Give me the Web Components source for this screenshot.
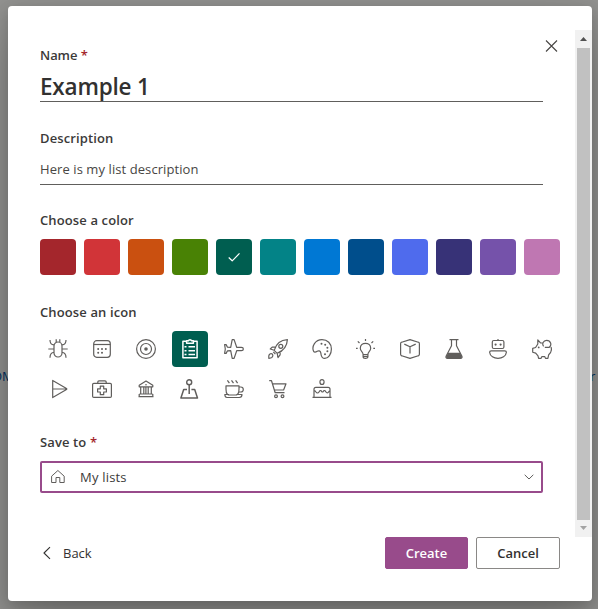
<!DOCTYPE html>
<html lang="en">
<head>
<meta charset="utf-8">
<title>Create list</title>
<style>
html, body { margin: 0; height: 100%; overflow: hidden; }
body { font-family: "Open Sans", "Noto Sans", sans-serif; font-size: 13px; color: #323130; background: #919191; }
</style>
</head>
<body>
<list-page></list-page>
<script>
const ICONS = {
  bug: '<rect x="6" y="3" width="8" height="15" rx="4"/><path d="M8.2 3V.3M11.8 3V.3M6 5.8C3 5.8 2 4 2 1M14 5.8c3 0 4-1.800 4-4.800M.3 10H6M14 10h5.700M6 13.500c-3 0-4 1.800-4 5.200M14 13.500c3 0 4 1.800 4 5.200"/>',
  calendar: '<rect x="1.700" y="1.700" width="16.600" height="16.600" rx="3"/><path d="M1.700 5.500h16.600"/><g fill="currentColor" stroke="none"><circle cx="6.200" cy="10" r="1"/><circle cx="10" cy="10" r="1"/><circle cx="13.800" cy="10" r="1"/><circle cx="6.200" cy="13.800" r="1"/><circle cx="10" cy="13.800" r="1"/></g>',
  target: '<circle cx="10" cy="10" r="9.400"/><circle cx="10" cy="10" r="5.500"/><circle cx="10" cy="10" r="1.800" fill="currentColor" stroke="none"/>',
  clipboard: '<path d="M6.500 2.200h-3.600v16.600h14.200V2.200h-3.600M6.600 3.500V1.800h1.800C8.700.5 11.300.5 11.600 1.800h1.800v2.400H6.600z" stroke-width="1.500"/><path d="M8.500 7.700h6.500M8.500 11.700h6.500M8.500 15.500h6.500M4.500 7.700h2M4.500 11.700h2M4.500 15.500h2" stroke-width="1.500"/>',
  plane: '<path d="M6.700 8.400 3.500 8.200 2.100 5.600H.6L1.300 10l-.7 4.400h1.500l1.400-2.600 3.200-.2 1.500 7.800h1.900l2.600-7.700h4.700c2.600 0 2.600-3.400 0-3.400h-4.700L10.100.6H8.200z"/>',
  rocket: '<path d="M6.200 11.300C7.600 6.500 11.500 1 19.400.6 19 8 14 12.400 9.200 14.300zM7.600 8 4.200 8.100 2.300 10l3.900 1.300M12.200 12.800l-.1 3.100-2.100 2.600-.8-4.200"/><circle cx="12.800" cy="7.300" r="2"/><path d="M.9 19.300c-.5-3 .4-4.600 2.200-4.600 2 0 2.300 2.600.7 3.800-.7.500-1.700.7-2.900.8zM5.300 12.800l2.100 2.300"/>',
  palette: '<path d="M1.600 12.300C-.6 7.400 3.200.6 10 .6c5.500 0 9.400 4 9.400 9.400 0 5.100-3 9.400-6.600 9.400-3.900 0-3.500-3-4-5.500-.5-2.400-2.400-2.300-3.600-1.600-1.500.9-2.800 1.200-3.600 0z"/><g fill="currentColor" stroke="none"><circle cx="9.500" cy="4.700" r="1"/><circle cx="13.200" cy="5.800" r="1"/><circle cx="15.400" cy="8.800" r="1"/><circle cx="15.400" cy="12.300" r="1"/><circle cx="13" cy="15.300" r="1"/></g>',
  bulb: '<g transform="translate(-.5)"><path d="M7.600 15.500c0-2.400-2.800-3.300-2.800-6.200 0-6.700 10.400-6.700 10.400 0 0 2.900-2.800 3.800-2.800 6.200zM7.600 15.500v2.200c0 2.100 4.800 2.100 4.800 0v-2.200M7.600 17.300h4.800M10 2V0M4 4 2.300 2.300M16 4l1.700-1.700M2.200 9.400H.5M17.800 9.400h1.700"/></g>',
  box: '<path d="m10 .6 8.300 2.600q1.100.3 1.100 1.500v10.600q0 1.200-1.100 1.500L10 19.400l-8.300-2.600q-1.100-.3-1.100-1.500V4.700q0-1.200 1.100-1.500zM4.300 5.100 10 7.800l5.700-2.700M10 7.800v6.600"/>',
  flask: '<path d="M5.500.6h9M7.500.6v6.200L2.200 17q-1 2.300 1.500 2.400h12.600q2.500-.1 1.500-2.400L12.500 6.800V.6"/><path d="M4 13.700h12l2 4q.3 1.700-1.700 1.700H3.700q-2 0-1.700-1.700z" fill="currentColor" stroke="none"/>',
  robot: '<path d="M10 1.500V0"/><rect x="4.300" y="1.500" width="11.600" height="8" rx="1.500"/><path d="M3.200 11.800h13.600q1.600 0 1.600 1.500C18 17.300 14 19.400 10 19.400S2 17.300 1.600 13.300Q1.600 11.800 3.200 11.800z"/><circle cx="7.600" cy="5.600" r="1.100" fill="currentColor" stroke="none"/><circle cx="12.600" cy="5.600" r="1.100" fill="currentColor" stroke="none"/>',
  piggy: '<path d="M10.700 4 8.500 3.800 5.800 1v4L3.600 8.500.7 9.300v3.900l3 .9 2.300 2.700.6 2.600h2.500l.7-1.800h3l.7 1.800h2.400l.8-3.700c2.300-2 3.300-4.800 2.300-7.700"/><path d="M11.600 7.400C9.700 5 11.200 1.300 14.600 1.300c4.200 0 5.500 4.700 2.700 7h-4.500"/><circle cx="6.700" cy="8.400" r=".9" fill="currentColor" stroke="none"/>',
  send: '<path d="m4.700 1.400 13.800 8.200q.7.400 0 .8L4.700 18.600zM4.700 10H19"/>',
  medkit: '<rect x=".6" y="4.400" width="18.800" height="14" rx="1.200"/><path d="M5.800 4.400V3q0-1.200 1.200-1.200h6q1.200 0 1.200 1.200v1.400M8.300 7.100h3.400v2.700h2.700v3.200h-2.700v2.700H8.300V13H5.600V9.800h2.700z"/>',
  bank: '<path d="m10 2 6.800 4.300v1.500H3.200V6.300zM4.700 7.900v7M7.800 7.900v7M12.200 7.900v7M15.300 7.900v7M3.400 15h13.200M2.500 17.600h15M3.200 15v2.600M16.800 15v2.600M9.900 8v7"/><circle cx="10" cy="5.700" r=".8" fill="currentColor" stroke="none"/>',
  joystick: '<circle cx="9.200" cy="3.200" r="2.500" stroke-width="1.400"/><path d="M9.200 5.800v9.300M7 10.500H3.700L.9 19h16.600l-2.800-8.500h-3.300" stroke-width="1.500"/>',
  coffee: '<path d="M2 6.800h13v3.500c0 6-2.500 5.700-4.500 5.700h-4C4.300 16 2 16.200 2 10.300zM15 8h1.800c3.300 0 3.300 5 0 5h-2.300M1.300 15.500H5M12.300 15.500H18q0 3-2.800 3H3Q1 18.500.8 15.500h3M3.400 1.300l2 2.900M7.500 1.300l2 2.900M11.600 1.300l2 2.900"/>',
  cart: '<path d="M1.200 1.700h2.300l3.700 12h9.300M4.500 4.800H18L15.600 11H6.300"/><circle cx="8" cy="17.200" r="1.400"/><circle cx="14.500" cy="17.200" r="1.400"/>',
  cake: '<path d="M10 .7c3 0 2.500 4.800 0 4.800S7 .7 10 .7zM2 18.300V10.200q0-1.900 1.900-1.900h12.200q1.900 0 1.900 1.900v8.100M.5 18.400h19M2 11.700c1 .2 1.600.6 2 1.300.8 1.300 2.200 1.300 3 0l.8-1.200q.7-.6 1.400 0l.8 1.200h.9l.8-1.200q.7-.6 1.400 0l.9 1.200c.8 1.300 2 1 2.600 0 .4-.7.800-1 1.400-1.200"/>',
  close: '<path d="m5 4.500 11 11m0-11-11 11" stroke-width="1.100"/>',
  check: '<path d="m4.700 10.500 3.500 3.300 7.300-7.400" stroke-width="1.200"/>',
  home: '<path d="M3.600 9.200 9.900 3.500 16.200 9.200v6.300h-4.400v-5H8v5H3.600z" stroke-width="1" stroke-linejoin="round"/>',
  down: '<path d="m5.700 7.800 4.300 4.200 4.300-4.200" stroke-width="1"/>',
  back: '<path d="M13 4.200 7 10l6 5.800" stroke-width="1.100"/>'
};

const define = (name, html) => customElements.define(name, class extends HTMLElement {
  constructor() {
    super();
    this.attachShadow({ mode: 'open' }).innerHTML = html;
  }
});

customElements.define('line-icon', class extends HTMLElement {
  connectedCallback() {
    if (this.shadowRoot) return;
    this.attachShadow({ mode: 'open' }).innerHTML = `<style>:host{display:block;width:20px;height:20px;flex:none}svg{display:block}</style>
      <svg width="20" height="20" viewBox="0 0 20 20" fill="none" stroke="currentColor" stroke-width="1.200" stroke-linejoin="round">${ICONS[this.getAttribute('name')]}</svg>`;
  }
});

define('field-label', `<style>
  :host{display:block;height:20px;line-height:20px;font-weight:600;font-size:13px;letter-spacing:.12px;white-space:nowrap;color:#3b3a39}
  i{display:none;font-style:normal;color:#a4262c}
  :host([required]) i{display:inline}
</style><slot></slot><i> *</i>`);

define('text-field', `<style>
  :host{display:block;width:503px;box-sizing:border-box;border-bottom:1px solid #605e5c;height:32px;line-height:32px;letter-spacing:.08px;white-space:nowrap;color:#484644}
  :host([large]){font-size:22.500px;font-weight:600;height:37px;line-height:44px;letter-spacing:-.2px;color:#323130}
</style><slot></slot>`);

customElements.define('color-swatch', class extends HTMLElement {
  connectedCallback() {
    if (this.shadowRoot) return;
    this.attachShadow({ mode: 'open' }).innerHTML = `<style>
      :host{display:grid;place-items:center;width:36px;height:36px;border-radius:4px;color:#fff;background:${this.getAttribute('color')}}
    </style>${this.hasAttribute('selected') ? '<line-icon name="check"></line-icon>' : ''}`;
  }
});

customElements.define('icon-option', class extends HTMLElement {
  connectedCallback() {
    if (this.shadowRoot) return;
    this.attachShadow({ mode: 'open' }).innerHTML = `<style>
      :host{display:grid;place-items:center;width:36px;height:36px;border-radius:4px;color:#605e5c}
      :host([selected]){background:#005e50;color:#fff}
    </style><line-icon name="${this.getAttribute('name')}"></line-icon>`;
  }
});

define('option-grid', `<style>
  :host{display:grid;grid-template-columns:repeat(12,36px);gap:4px 8px}
</style><slot></slot>`);

define('location-select', `<style>
  :host{display:flex;align-items:center;box-sizing:border-box;width:503px;height:32px;border:2px solid #984b8b;border-radius:2px;padding:0 2px 0 6px;color:#605e5c}
  span{flex:1;margin-left:12px;color:#3b3a39;line-height:28px;letter-spacing:.2px}
</style><line-icon name="home"></line-icon><span><slot></slot></span><line-icon name="down"></line-icon>`);

define('push-button', `<style>
  :host{display:block;box-sizing:border-box;height:32px;width:84px;border:1px solid #8a8886;border-radius:2px;text-align:center;font-weight:600;line-height:30px;font-size:13px;background:#fff}
  :host([primary]){width:83px;background:#984b8b;border-color:#984b8b;color:#fff}
</style><slot></slot>`);

define('scroll-track', `<style>
  :host{display:flex;flex-direction:column;align-items:center;width:17px;height:507px;background:#f1f1f1}
  svg{display:block;flex:none}
  div{width:13px;flex:1;background:#c1c1c1}
</style>
<svg width="17" height="18"><path d="M5 11 8.500 7 12 11z" fill="#505050"/></svg>
<div></div>
<svg width="17" height="17"><path d="M5 6 8.500 10 12 6z" fill="#a3a3a3"/></svg>`);

define('list-dialog', `<style>
  :host{display:block;box-sizing:border-box;width:584px;height:595px;padding-top:24px;background:#fff;border-radius:4px;box-shadow:0 25.600px 57.600px rgba(0,0,0,.22),0 4.800px 14.400px rgba(0,0,0,.18)}
  .body{display:flex;height:507px}
  .form{flex:1;padding:15px 0 0 32px;box-sizing:border-box;display:flex;flex-direction:column}
  .top{display:flex;align-items:flex-start;justify-content:space-between;height:56px}
  .top line-icon{margin:-9px 14px 0 -12px;color:#484644}
  .sp1{margin-top:27px}.sp2{margin-top:25px}.sp3{margin-top:27px}.sp4{margin-top:25px}
  .g1{margin-top:5px}.g2{margin-top:9px}
  text-field,location-select{flex:none}
  footer{display:flex;align-items:center;height:32px;padding:0 32px 0 29px;gap:8px}
  footer span{flex:1;margin-left:-2px}
  footer line-icon{color:#323130}
</style>
<div class="body">
  <div class="form">
    <div class="top"><div>
      <field-label required style="letter-spacing:-.05px">Name</field-label>
      <text-field large>Example 1</text-field>
    </div><line-icon name="close"></line-icon></div>
    <field-label class="sp1">Description</field-label>
    <text-field class="g1">Here is my list description</text-field>
    <field-label class="sp2">Choose a color</field-label>
    <option-grid class="g2">
      <color-swatch color="#a4262c"></color-swatch><color-swatch color="#d13438"></color-swatch>
      <color-swatch color="#ca5010"></color-swatch><color-swatch color="#498205"></color-swatch>
      <color-swatch color="#005e50" selected></color-swatch><color-swatch color="#038387"></color-swatch>
      <color-swatch color="#0078d4"></color-swatch><color-swatch color="#004e8c"></color-swatch>
      <color-swatch color="#4f6bed"></color-swatch><color-swatch color="#373277"></color-swatch>
      <color-swatch color="#7552aa"></color-swatch><color-swatch color="#bf77b2"></color-swatch>
    </option-grid>
    <field-label class="sp3">Choose an icon</field-label>
    <option-grid class="g2">
      ${['bug','calendar','target','clipboard','plane','rocket','palette','bulb','box','flask','robot','piggy','send','medkit','bank','joystick','coffee','cart','cake']
        .map(n => `<icon-option name="${n}"${n === 'clipboard' ? ' selected' : ''}></icon-option>`).join('')}
    </option-grid>
    <field-label class="sp4" required>Save to</field-label>
    <location-select class="g2">My lists</location-select>
  </div>
  <scroll-track></scroll-track>
</div>
<footer><line-icon name="back"></line-icon><span>Back</span>
<push-button primary>Create</push-button><push-button>Cancel</push-button></footer>`);

define('list-page', `<style>
  :host{display:block;position:relative;height:609px;box-sizing:border-box;padding:6px 6px 8px 8px;overflow:hidden;background:#929290}
  .bg{position:absolute;top:366px;line-height:20px;font-size:13px;color:#002f5e;white-space:nowrap}
  .l{left:-8px}.r{left:590px}
  list-dialog{position:relative}
</style><span class="bg l">OM</span><span class="bg r">r</span><list-dialog></list-dialog>`);
</script>
</body>
</html>
